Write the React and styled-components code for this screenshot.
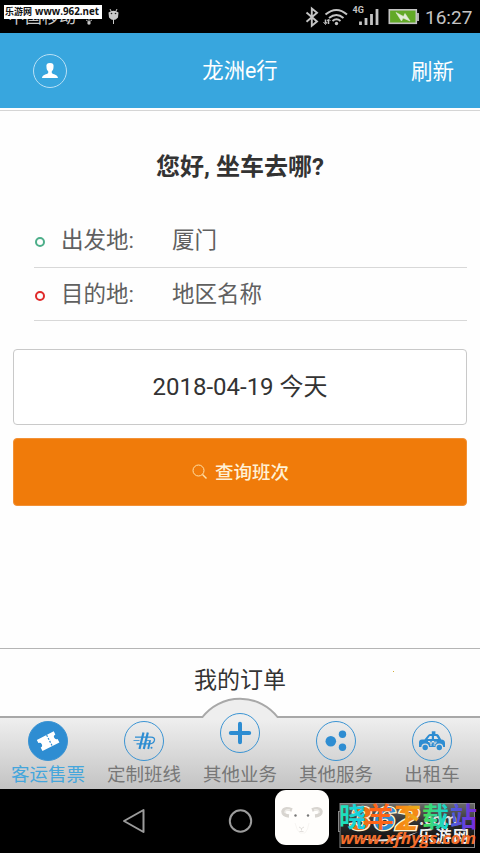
// React
import React from 'react'
import styled, { createGlobalStyle } from 'styled-components'

const tabs = [
  { name: '客运售票', icon: 'ticket', active: true },
  { name: '定制班线', icon: 'route' },
  { name: '其他业务', icon: 'plus', raised: true },
  { name: '其他服务', icon: 'service' },
  { name: '出租车', icon: 'taxi' }
]

const StatusIcons = () => (
  <svg width="130" height="33" viewBox="290 0 130 33" fill="none" stroke="#c4c4c4">
    <path d="M306.500 12.500l10.500 9-5.200 4.300V8.500l5.200 4.200-10.500 9" strokeWidth="1.900" />
    <path d="M325.500 14.500q11-9 21.500 0M329 18q7.500-6 14.500 0M332.500 21q4-3.500 8 0" strokeWidth="2" />
    <circle cx="336.500" cy="23.500" r="1.700" fill="#c4c4c4" stroke="none" />
    <path d="M325.500 19.500v4M328.500 20v4" strokeWidth="1.500" />
    <path d="M323.500 22l2 2.500 1.500-2.500M327 21l1.500-2 2 2" strokeWidth="1" />
    <text x="352.500" y="12.500" fill="#c4c4c4" stroke="none" fontSize="9" fontWeight="700" fontFamily="Roboto, sans-serif">4G</text>
    <path d="M360.500 21.500v3.500M366 18v7M371.500 14v11M377 9v16" strokeWidth="2.800" />
    <rect x="389.300" y="9.800" width="27" height="13.500" fill="#62a927" strokeWidth="1.600" />
    <path d="M418 13v8" strokeWidth="1.800" />
    <path d="M396 12.500l7.500 4 1.500-3 5 7.500-7-3-1.500 3z" fill="#e3ecd9" stroke="#e3ecd9" strokeWidth=".6" />
  </svg>
)

const Notifications = () => (
  <svg width="36" height="27" viewBox="84 0 36 27" fill="#c9c9c9">
    <path d="M89 18v5M86 20l3 2 3-2" stroke="#aaa" fill="none" />
    <circle cx="89" cy="23" r="1.700" />
    <path d="M108.500 12.500q5-3.500 10 0l-.5 5q-4.500 5-9 0z" />
    <path d="M110 9l1.500 3M117 9l-1.500 3M113.500 19v5" stroke="#c9c9c9" />
    <circle cx="111.500" cy="13.500" r=".8" fill="#222" />
    <circle cx="115.500" cy="13.500" r=".8" fill="#222" />
  </svg>
)

const TabIcon = ({ type }) => (
  <svg width="40" height="40" viewBox="0 0 40 40" fill="#2e8dd2">
    {type === 'ticket' && (
      <g transform="rotate(-27 20 20)">
        <path d="M10.500 14h19v3.500a2.500 2.500 0 0 0 0 5v4h-19v-4a2.500 2.500 0 0 0 0-5z" fill="#fff" />
        <path d="M21.500 14v12.500" stroke="#2e8dd2" strokeWidth="1.200" strokeDasharray="2 1.300" />
      </g>
    )}
    {type === 'route' && (
      <g fill="none" stroke="#2e8dd2">
        <path d="M19.500 11.500l-4 16.500M23.800 11.500l-4 16.500" strokeWidth="2.200" />
        <path d="M11 16.200h16q4 0 3.500 3-.7 3.600-4.500 3.600H12.500" strokeWidth="1.300" />
        <path d="M9.500 19.500h6M22 19.500h5" strokeWidth=".8" />
        <path d="M26 20l-1.800 8" strokeWidth="1.900" />
        <circle cx="27.500" cy="26.700" r="1" fill="#2e8dd2" stroke="none" />
      </g>
    )}
    {type === 'plus' && <path d="M20 10.800v18.400M10.800 20h18.400" stroke="#2e8dd2" strokeWidth="4" strokeLinecap="round" />}
    {type === 'service' && (
      <>
        <circle cx="14.800" cy="20.300" r="5.300" />
        <circle cx="26.500" cy="13.200" r="3.700" />
        <circle cx="26.500" cy="26.300" r="3.700" />
      </>
    )}
    {type === 'taxi' && (
      <>
        <path d="M19.800 10.300h3.600v3.500h-3.600z" />
        <path d="M7 26v-4.500q0-3 3-3h2.500l3.500-4.300q1-1.200 2.500-1.200h6q1.500 0 2.300 1.300l2.400 4.200q3.800.2 3.800 3.500v4z" />
        <path d="M15.500 18l2.300-3h2v3zM22 15h2.300l2 3H22z" fill="#e6e6e6" />
        <path d="M16 20.500h2v1.700h2v-1.700h2v1.700h2v-1.700M18 24h1.800M21.500 24h1.800" fill="none" stroke="#e2e2e2" />
        <circle cx="13.200" cy="26.500" r="3.900" fill="#dedede" />
        <circle cx="27.300" cy="26.500" r="3.900" fill="#dedede" />
        <circle cx="13.200" cy="26.500" r="2.700" />
        <circle cx="27.300" cy="26.500" r="2.700" />
      </>
    )}
  </svg>
)

const PlaceRow = ({ label, value, color }) => (
  <Place>
    <Dot color={color} />
    <PlaceValue>
      <Label>{label}</Label>
      <span>{value}</span>
    </PlaceValue>
  </Place>
)

const GoatIcon = () => (
  <svg width="54" height="56" viewBox="0 0 54 56" fill="none">
    <path d="M17 20q-8-3-9 1.500 0 4 6 4.500M37 20q8-3 9 1.500 0 4-6 4.500" stroke="#d8d5d0" strokeWidth="3.500" />
    <path d="M15 20q-5-1-5 3M39 20q5-1 5 3" stroke="#eeece8" strokeWidth="1.500" />
    <circle cx="20.500" cy="25.500" r="1.200" fill="#777" />
    <circle cx="33" cy="25.500" r="1.200" fill="#777" />
    <path d="M20 33q2 8 5 10h5q3-3 4-10" stroke="#f7f5f2" />
    <path d="M24 37l2.500 1.500 2.500-1.500M26.500 38.500v2M24.500 41.500h4" stroke="#d9d6d2" strokeWidth=".8" />
  </svg>
)

const Watermark = () => (
  <svg width="142" height="64" viewBox="338 789 142 64">
    <defs>
      <linearGradient id="banner" x2="0" y2="1">
        <stop stopColor="#6b6b6b" />
        <stop offset=".5" stopColor="#292929" />
        <stop offset="1" stopColor="#050505" />
      </linearGradient>
      <linearGradient id="dawn" x2="1">
        <stop stopColor="#20e5b0" />
        <stop offset="1" stopColor="#12c8f0" />
      </linearGradient>
      <linearGradient id="down" x2="1">
        <stop stopColor="#ff7a12" />
        <stop offset="1" stopColor="#e5b51a" />
      </linearGradient>
      <linearGradient id="load" x2="1">
        <stop stopColor="#4cdc4a" />
        <stop offset="1" stopColor="#12d2e0" />
      </linearGradient>
      <linearGradient id="station" x2="1">
        <stop stopColor="#4962dc" />
        <stop offset="1" stopColor="#7a28dc" />
      </linearGradient>
    </defs>
    <rect x="338.500" y="811.500" width="19" height="20" fill="none" stroke="#888" />
    <rect x="340" y="803.500" width="134.500" height="44" fill="url(#banner)" stroke="#888" />
    <path d="M348 834q30 12 70-2-32 18-70 2" fill="#ddd" />
    <g fontFamily="'Liberation Sans', sans-serif" fontSize="33" fontWeight="700" fontStyle="italic" stroke="#fff3d2" strokeWidth="2.500" paintOrder="stroke">
      <text x="350" y="830" fill="#ed7014" textLength="21" lengthAdjust="spacingAndGlyphs">3</text>
      <text x="373" y="830" fill="#318ed0" textLength="22" lengthAdjust="spacingAndGlyphs">6</text>
      <text x="396" y="830" fill="#f58916" textLength="23" lengthAdjust="spacingAndGlyphs">2</text>
    </g>
    <g fontFamily="'Noto Sans CJK SC', sans-serif" fontWeight="700">
      <text x="419" y="825" fill="#ddd" fontSize="16">.com</text>
      <text x="418" y="842" fill="#f3f3f3" fontSize="16" textLength="51">乐游网</text>
      <g fontSize="27">
        <text x="339" y="827" fill="url(#dawn)">晓</text>
        <text x="367" y="827" fill="#ff6517">羊</text>
        <text x="394" y="827" fill="url(#down)">下</text>
        <text x="422" y="827" fill="url(#load)">载</text>
        <text x="450" y="827" fill="url(#station)">站</text>
      </g>
    </g>
    <text x="340" y="843.500" fill="#f26e2c" fontFamily="'Open Sans', sans-serif" fontSize="16" fontStyle="italic" fontWeight="700" textLength="136" lengthAdjust="spacingAndGlyphs">www.xfhygs.com</text>
  </svg>
)

export default function App() {
  return (
    <Screen>
      <GlobalStyle />
      <StatusBar>
        <Carrier>中国移动</Carrier>
        <SiteTag>
          <b>乐游网</b>
          <SiteUrl>www.962.net</SiteUrl>
        </SiteTag>
        <NoticeWrap>
          <Notifications />
        </NoticeWrap>
        <StatusIcons />
        <Clock>16:27</Clock>
      </StatusBar>
      <Header>
        <Avatar>
          <svg width="18" height="18" viewBox="0 0 18 18" fill="#fff">
            <path d="M9 1c3 0 4 1.500 3.500 4.300 0 2-.7 3-1.700 4V11c1 1.400 6.200 1.700 6.200 5H1c0-3.300 5.200-3.600 6.200-5V9.300c-1-1-1.700-2-1.700-4C5 2.500 6 1 9 1z" />
          </svg>
        </Avatar>
        <HeaderTitle>龙洲e行</HeaderTitle>
        <Refresh>刷新</Refresh>
      </Header>
      <Main>
        <Greeting>您好, 坐车去哪?</Greeting>
        <PlaceRow label="出发地:" value="厦门" color="#4cae89" />
        <PlaceRow label="目的地:" value="地区名称" color="#e02a2a" />
        <DateButton>2018-04-19 今天</DateButton>
        <SearchButton>
          <svg width="16" height="16" viewBox="0 0 16 16" fill="none" stroke="#ffe1a8">
            <circle cx="6.500" cy="6.500" r="5.500" strokeWidth="1" />
            <path d="M10.500 10.500l4 4" strokeWidth="1.500" />
          </svg>
          <span>查询班次</span>
        </SearchButton>
      </Main>
      <Orders>
        我的订单
        <Speck />
      </Orders>
      <TabBar>
        <Hump width="80" height="24" viewBox="0 0 80 24">
          <path d="M1 24L2 21.500A47.500 47.500 0 0 1 78 21.500L79 24z" fill="#eee" />
          <path d="M0 21H2.500A47.500 47.500 0 0 1 77.500 21H80" fill="none" stroke="#a8a8a8" strokeWidth="2" />
        </Hump>
        {tabs.map(tab => (
          <Tab key={tab.name} $active={tab.active}>
            <TabCircle $active={tab.active} $raised={tab.raised}>
              <TabIcon type={tab.icon} />
            </TabCircle>
            <TabLabel>{tab.name}</TabLabel>
          </Tab>
        ))}
      </TabBar>
      <SystemNav>
        <svg width="260" height="64" viewBox="0 0 260 64" fill="none" stroke="#9c9c9c" strokeWidth="2">
          <path d="M143.500 21v22L124 32z" strokeLinejoin="round" />
          <circle cx="240.500" cy="32" r="10.700" />
        </svg>
        <GoatBadge>
          <GoatIcon />
        </GoatBadge>
        <Brand>
          <Watermark />
        </Brand>
      </SystemNav>
    </Screen>
  )
}

const GlobalStyle = createGlobalStyle`
  * {
    box-sizing: border-box;
  }
  body {
    margin: 0;
    background: #fefefe;
  }
  svg {
    display: block;
    flex-shrink: 0;
  }
  button {
    font: inherit;
    padding: 0;
  }
`

const Screen = styled.div`
  display: flex;
  flex-direction: column;
  width: 480px;
  height: 853px;
  overflow: hidden;
  background: #fefefe;
  font-family: Roboto, 'Noto Sans CJK SC', sans-serif;
  color: #333;
`

const StatusBar = styled.div`
  position: relative;
  display: flex;
  justify-content: flex-end;
  flex: 0 0 33px;
  overflow: hidden;
  background: #000;
`

const Carrier = styled.span`
  position: absolute;
  left: 8px;
  top: 7px;
  color: #c9c9c9;
  font-size: 17px;
  line-height: 20px;
`

const SiteTag = styled.div`
  position: absolute;
  left: 4px;
  top: 5px;
  display: flex;
  align-items: center;
  width: 98px;
  height: 14px;
  padding-left: 1px;
  background: #fff;
  color: #111;
  font-size: 9px;
  line-height: 14px;
  white-space: nowrap;
`

const SiteUrl = styled.b`
  margin-left: 3px;
  font-family: 'Open Sans', sans-serif;
  font-size: 9.800px;
`

const NoticeWrap = styled.div`
  position: absolute;
  left: 84px;
  top: 0;
  clip-path: polygon(18px 0, 100% 0, 100% 100%, 0 100%, 0 19px, 18px 19px);
`

const Clock = styled.span`
  width: 60px;
  padding-left: 5px;
  color: #c4c4c4;
  font-size: 19px;
  line-height: 35px;
`

const Header = styled.header`
  display: grid;
  grid-template-columns: 100px 1fr 100px;
  align-items: center;
  flex: 0 0 75px;
  background: #38a6de;
  color: #fff;
`

const Avatar = styled.button`
  display: flex;
  align-items: center;
  justify-content: center;
  width: 34px;
  height: 34px;
  margin-left: 33px;
  border: 1px solid #b9e0f5;
  border-radius: 50%;
  background: none;
`

const HeaderTitle = styled.h1`
  margin: 0;
  padding-top: 1px;
  font-size: 21.400px;
  font-weight: 400;
  line-height: 30px;
  text-align: center;
`

const Refresh = styled.span`
  padding: 2px 0 0 31px;
  font-size: 21.500px;
  line-height: 32px;
`

const Main = styled.main`
  flex: 1;
  margin-top: 2px;
  padding: 0 13px;
  border-top: 1px solid #d5d5d5;
`

const Greeting = styled.h2`
  margin: 38px 0 29px;
  font-size: 24px;
  font-weight: 700;
  line-height: 36px;
  text-align: center;
`

const Place = styled.div`
  display: flex;
  align-items: center;
  height: 53.500px;
  margin-left: 21px;
  border-bottom: 1px solid #d8d8d8;
  color: #606060;
  font-size: 22.500px;
  line-height: 34px;
`

const Dot = styled.i`
  width: 10px;
  height: 10px;
  margin: 4px 16px 0 1px;
  border: 2px solid ${props => props.color};
  border-radius: 50%;
`

const PlaceValue = styled.div`
  display: flex;
`

const Label = styled.span`
  width: 111px;
`

const DateButton = styled.button`
  display: block;
  width: 100%;
  height: 76px;
  margin-top: 28px;
  padding-bottom: 5px;
  border: 1px solid #c9c9c9;
  border-radius: 4px;
  background: #fff;
  color: #333;
  font-size: 24px;
`

const SearchButton = styled.button`
  display: flex;
  align-items: center;
  justify-content: center;
  gap: 7px;
  width: 100%;
  height: 68px;
  margin-top: 13px;
  padding-left: 1px;
  border: 1px solid #f29136;
  border-radius: 4px;
  background: #f07b0a;
  color: #fff1d5;
  font-size: 18.500px;
  font-weight: 500;

  span {
    padding-bottom: 2px;
  }
`

const Orders = styled.div`
  position: relative;
  flex: 0 0 68px;
  border-top: 1px solid #b5b5b5;
  font-size: 23px;
  line-height: 64px;
  text-align: center;
`

const Speck = styled.i`
  position: absolute;
  left: 393px;
  top: 22px;
  width: 1px;
  height: 1px;
  background: #d4ae38;
`

const TabBar = styled.nav`
  position: relative;
  display: grid;
  grid-template-columns: repeat(5, 96px);
  grid-template-rows: 71px;
  flex: 0 0 73px;
  border-top: 2px solid #a8a8a8;
  background: linear-gradient(#efefef, #c3c3c3);
`

const Hump = styled.svg`
  position: absolute;
  left: 200px;
  top: -22px;
`

const Tab = styled.div`
  z-index: 1;
  display: flex;
  flex-direction: column;
  align-items: center;
  justify-content: flex-end;
  color: ${props => (props.$active ? '#45a6dc' : '#777')};
`

const TabCircle = styled.div`
  display: flex;
  align-items: center;
  justify-content: center;
  flex-shrink: 0;
  width: 40px;
  height: 40px;
  margin-bottom: ${props => (props.$raised ? 8 : 0)}px;
  border: 1px solid #3b94d3;
  border-radius: 50%;
  background: ${props => (props.$active ? '#2e8dd2' : 'transparent')};
`

const TabLabel = styled.span`
  font-size: 18.500px;
  line-height: 28px;
`

const SystemNav = styled.footer`
  position: relative;
  flex: 0 0 64px;
  background: #000;
`

const GoatBadge = styled.div`
  position: absolute;
  left: 275px;
  top: 1px;
  width: 54px;
  height: 55px;
  overflow: hidden;
  border-radius: 11px;
  background: #fffefc;
`

const Brand = styled.div`
  position: absolute;
  left: 338px;
  top: 0;
`
